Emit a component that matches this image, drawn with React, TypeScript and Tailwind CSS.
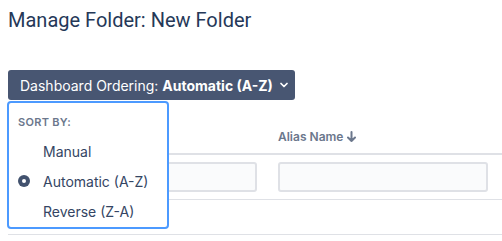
import { ChevronDown } from "lucide-react";

const options = [
  { label: "Manual", checked: false },
  { label: "Automatic (A-Z)", checked: true },
  { label: "Reverse (Z-A)", checked: false },
];

export default function App() {
  return (
    <div className="relative h-[241px] w-[502px] overflow-hidden bg-white font-['Inter','Liberation_Sans',sans-serif]">
      <div className="pl-2 pt-2">
        <h1 className="font-['Roboto',sans-serif] text-[20px] leading-6 text-[#253858]">
          Manage Folder: New Folder
        </h1>

        {/* Ordering dropdown */}
        <div className="relative z-10 mt-[38px] inline-block">
          <button className="flex h-[30px] items-center gap-[5px] rounded-[3px] bg-[#485672] pl-3 pr-[5px] text-[14px] text-white">
            <span>
              Dashboard Ordering: <span className="font-bold">Automatic (A-Z)</span>
            </span>
            <ChevronDown className="h-3 w-3" strokeWidth={3.5} />
          </button>
          <div className="absolute left-[-1px] top-[31px] w-[162px] rounded-[4px] border-2 border-[#4c9aff] bg-white pb-[1px] pl-[9px] pt-3">
            <div className="mb-[7px] text-[11px] font-semibold uppercase leading-[14px] tracking-[0.3px] text-[#6b778c]">
              Sort by:
            </div>
            {options.map((o) => (
              <div key={o.label} className="flex h-[30px] items-center text-[14px] text-[#344563]">
                <div className="w-[25px]">
                  {o.checked && (
                    <div className="flex h-3 w-3 items-center justify-center rounded-full bg-[#42526e]">
                      <div className="h-1 w-1 rounded-full bg-white" />
                    </div>
                  )}
                </div>
                {o.label}
              </div>
            ))}
          </div>
        </div>

        {/* Table */}
        <div className="mt-5">
          <div className="grid h-[35px] grid-cols-[260px_234px] items-center border-b-2 border-[#dfe1e6] text-[12px] font-semibold text-[#6b778c]">
            <div className="pl-[10px]">Name</div>
            <div className="flex items-center gap-1 pl-[10px]">
              Alias Name
              <svg width="9" height="11" viewBox="0 0 9 11" fill="none" stroke="#6b778c" strokeWidth="2" strokeLinecap="round" strokeLinejoin="round">
                <path d="M4.5 1v9M1 6.5l3.5 3.5L8 6.5" />
              </svg>
            </div>
          </div>
          <div className="grid grid-cols-[260px_234px] border-b border-[#dfe1e6] pb-[7px] pt-[7px]">
            <div className="pl-[10px] pr-[11px]">
              <div className="h-[30px] rounded-[3px] border-2 border-[#dfe1e6] bg-[#fafbfc]" />
            </div>
            <div className="pl-[10px] pr-[14px]">
              <div className="h-[30px] rounded-[3px] border-2 border-[#dfe1e6] bg-[#fafbfc]" />
            </div>
          </div>
          <div className="h-[35px] border-b border-[#dfe1e6]" />
        </div>
      </div>
    </div>
  );
}
